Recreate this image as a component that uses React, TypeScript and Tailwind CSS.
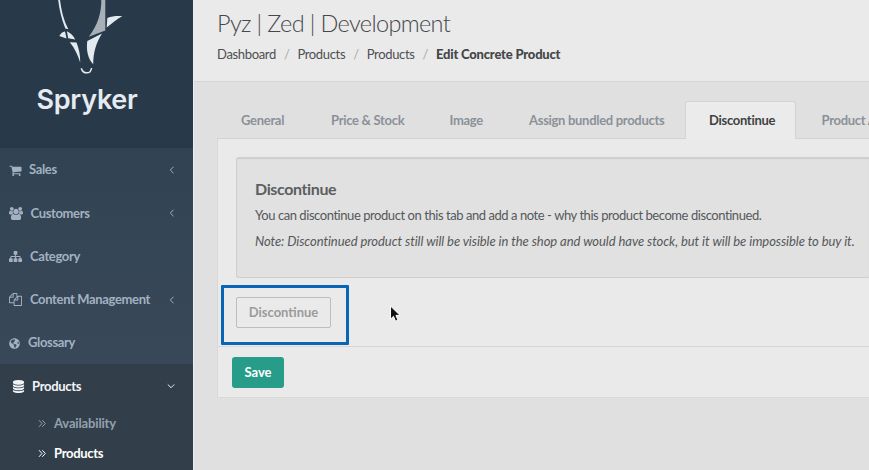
import type { ReactNode } from "react";
import { FaGlobeAmericas } from "react-icons/fa";

const paths = {
  cart: "M704 1536q0 52-38 90t-90 38-90-38-38-90 38-90 90-38 90 38 38 90zm896 0q0 52-38 90t-90 38-90-38-38-90 38-90 90-38 90 38 38 90zm128-1088v512q0 24-16.5 42.5t-40.5 21.5l-1044 122q13 60 13 70 0 16-24 64h920q26 0 45 19t19 45-19 45-45 19h-1024q-26 0-45-19t-19-45q0-11 8-31.5t16-36 21.5-40 15.5-29.5l-177-823h-204q-26 0-45-19t-19-45 19-45 45-19h256q16 0 28.5 6.5t19.5 15.5 13 24.5 8 26 5.5 29.5 4.5 26h1201q26 0 45 19t19 45z",
  users: "M593 896q-162 5-265 128h-134q-82 0-138-40.5t-56-118.5q0-353 124-353 6 0 43.5 21t97.5 42.5 119 21.5q67 0 133-23-5 37-5 66 0 139 81 256zm1071 637q0 120-73 189.5t-194 69.5h-874q-121 0-194-69.5t-73-189.5q0-53 3.5-103.5t14-109 26.5-108.5 43-97.5 62-81 85.5-53.5 111.5-20q10 0 43 21.5t73 48 107 48 135 21.5 135-21.5 107-48 73-48 43-21.5q61 0 111.5 20t85.5 53.5 62 81 43 97.5 26.5 108.5 14 109 3.5 103.5zm-1024-1277q0 106-75 181t-181 75-181-75-75-181 75-181 181-75 181 75 75 181zm704 384q0 159-112.5 271.5t-271.5 112.5-271.5-112.5-112.5-271.5 112.5-271.5 271.5-112.5 271.5 112.5 112.5 271.5zm576 225q0 78-56 118.5t-138 40.5h-134q-103-123-265-128 81-117 81-256 0-29-5-66 66 23 133 23 59 0 119-21.5t97.5-42.5 43.5-21q124 0 124 353zm-128-609q0 106-75 181t-181 75-181-75-75-181 75-181 181-75 181 75 75 181z",
  sitemap: "M1792 1248v320q0 40-28 68t-68 28h-320q-40 0-68-28t-28-68v-320q0-40 28-68t68-28h96v-192h-512v192h96q40 0 68 28t28 68v320q0 40-28 68t-68 28h-320q-40 0-68-28t-28-68v-320q0-40 28-68t68-28h96v-192h-512v192h96q40 0 68 28t28 68v320q0 40-28 68t-68 28h-320q-40 0-68-28t-28-68v-320q0-40 28-68t68-28h96v-192q0-52 38-90t90-38h512v-192h-96q-40 0-68-28t-28-68v-320q0-40 28-68t68-28h320q40 0 68 28t28 68v320q0 40-28 68t-68 28h-96v192h512q52 0 90 38t38 90v192h96q40 0 68 28t28 68z",
  files: "M1696 384q40 0 68 28t28 68v1216q0 40-28 68t-68 28h-960q-40 0-68-28t-28-68v-288h-544q-40 0-68-28t-28-68v-672q0-40 20-88t48-76l408-408q28-28 76-48t88-20h416q40 0 68 28t28 68v328q68-40 128-40h416zm-544 213l-299 299h299v-299zm-640-384l-299 299h299v-299zm196 647l316-316v-416h-384v416q0 40-28 68t-68 28h-416v640h512v-256q0-40 20-88t48-76zm956 804v-1152h-384v416q0 40-28 68t-68 28h-416v640h896z",
  database: "M896 768q237 0 443-43t325-127v170q0 69-103 128t-280 93.5-385 34.5-385-34.5-280-93.5-103-128v-170q119 84 325 127t443 43zm0 768q237 0 443-43t325-127v170q0 69-103 128t-280 93.5-385 34.5-385-34.5-280-93.5-103-128v-170q119 84 325 127t443 43zm0-384q237 0 443-43t325-127v170q0 69-103 128t-280 93.5-385 34.5-385-34.5-280-93.5-103-128v-170q119 84 325 127t443 43zm0-1152q208 0 385 34.5t280 93.5 103 128v128q0 69-103 128t-280 93.5-385 34.5-385-34.5-280-93.5-103-128v-128q0-69 103-128t280-93.5 385-34.5z",
};

function Glyph({ d, box = "0 0 1792 1792", className }: { d: string; box?: string; className: string }) {
  return (
    <svg viewBox={box} className={`shrink-0 fill-current ${className}`}>
      <path d={d} />
    </svg>
  );
}

function Chevron({ className }: { className: string }) {
  return (
    <svg viewBox="0 0 8 8" className={`size-2 shrink-0 fill-none stroke-current ${className}`}>
      <path d="M5.5 0.8 2.3 4l3.2 3.2" strokeWidth="1" />
    </svg>
  );
}

function Logo() {
  return (
    <svg viewBox="0 0 80 76" className="h-[76px] w-20 shrink-0">
      <path d="M8.200 0h1.800C11.300 10 13.500 20 18.300 29.300l-3-.8C11.500 19 9.200 9 8.200 0z" fill="#e3eaf0" />
      <path d="M9.300 36c1.500-2.800 3.500-4.300 5.700-4.500l1.500 7zM16.900 31.200c3.500 1.500 6.500 4.500 8.300 8.300l-7-1.200z" fill="#e3eaf0" />
      <path d="M19.800 42.200l6.700.4c2.500 6 3.800 12.700 3.700 19.800C27.700 55 25 48.500 19.800 42.200z" fill="#e3eaf0" />
      <path d="M51.300 0h4v30.500L38.800 36.800C48 25 51.500 12 51.300 0z" fill="#a8b0b7" />
      <path d="M57.300 18c5-1.900 9.500-2.200 15-1.800-5.600 2.600-9.700 6.800-15.600 11.300z" fill="#e3eaf0" />
      <path d="M37.300 41l14.700-7.400c-5.800 9-8.600 18.500-8.800 30.700-5.200-5.500-7.200-14-5.900-23.300z" fill="#e3eaf0" />
      <path d="M31.300 68.200c1.700 6.200 9.500 6.300 10.200-.2" fill="none" stroke="#e3eaf0" strokeWidth="1.500" />
    </svg>
  );
}

function NavItem({ icon, label, className, arrow }: { icon: ReactNode; label: string; className: string; arrow?: boolean }) {
  return (
    <li className="flex h-[43.25px] items-center pt-px pr-[17px] pl-[9px] text-[13px] font-bold tracking-[-0.35px] text-[#a3b1c2]">
      {icon}
      <span className={`whitespace-nowrap ${className}`}>{label}</span>
      {arrow && <Chevron className="ml-auto" />}
    </li>
  );
}

function Sidebar() {
  return (
    <aside className="flex w-[193px] shrink-0 flex-col bg-[#33434f]">
      <div className="flex h-[148px] flex-col items-center bg-[#283a49] pr-[19px]">
        <div className="pl-[6px]"><Logo /></div>
        <div className="mt-[8px] font-[Inter,sans-serif] text-[27px] leading-[32px] font-semibold tracking-[-0.3px] text-[#e6ebf2]">Spryker</div>
      </div>
      <ul className="bg-linear-to-b from-[#314352] to-[#394858]">
        <NavItem icon={<Glyph d={paths.cart} className="size-[13px]" />} label="Sales" className="ml-[7px]" arrow />
        <NavItem icon={<Glyph d={paths.users} box="0 0 1920 1792" className="h-[13px] w-[14px]" />} label="Customers" className="ml-[7.5px]" arrow />
        <NavItem icon={<Glyph d={paths.sitemap} className="size-[13px]" />} label="Category" className="ml-[8px]" />
        <NavItem icon={<Glyph d={paths.files} className="size-[13px]" />} label="Content Management" className="ml-[8px]" arrow />
        <NavItem icon={<FaGlobeAmericas className="size-[11px]" />} label="Glossary" className="ml-[8px]" />
      </ul>
      <div className="flex-1 bg-[#323f4b] text-[13px] font-bold tracking-[-0.3px]">
        <div className="flex h-[44px] items-center pr-[18px] pl-[12px] text-[#f1f4f7]">
          <Glyph d={paths.database} className="size-[13px]" />
          <span className="ml-[7px]">Products</span>
          <Chevron className="ml-auto -rotate-90" />
        </div>
        <div className="flex h-[30px] items-center pl-[38px] text-[#94a0ad]">
          <Raquo />
          <span className="ml-[7px] tracking-[-0.15px]">Availability</span>
        </div>
        <div className="flex h-[30px] items-center pl-[38px] text-white">
          <Raquo />
          <span className="ml-[7px]">Products</span>
        </div>
      </div>
    </aside>
  );
}

function Raquo() {
  return (
    <svg viewBox="0 0 9 9" className="size-[9px] shrink-0 fill-none stroke-current">
      <path d="M1 1.200 4 4.500 1 7.800M4.300 1.200 7.300 4.500 4.300 7.800" />
    </svg>
  );
}

function Slash() {
  return <span className="w-[21.5px] pl-[8px] text-[#a9a9a9]">/</span>;
}

export default function App() {
  return (
    <div className="relative flex h-[470px] w-[869px] overflow-hidden bg-[#e0e0e0] font-[Lato,sans-serif] text-[13px] text-[#55585a]">
      <Sidebar />
      <main className="flex w-[676px] shrink-0 flex-col border-l border-[#eeeeee]">
        <header className="h-[82px] border-b border-[#d5d5d5] bg-[#eaeaea] pl-[23px]">
          <h1 className="pt-[8px] text-[23.5px] leading-[30px] font-light tracking-[-0.64px] whitespace-nowrap text-[#45474a]">Pyz | Zed | Development</h1>
          <nav className="mt-[8px] flex leading-4 tracking-[-0.34px] whitespace-nowrap text-[#4d4f50]">
            <span>Dashboard</span><Slash />
            <span>Products</span><Slash />
            <span>Products</span><Slash />
            <b className="font-black tracking-[-0.2px] text-[#444647]">Edit Concrete Product</b>
          </nav>
        </header>
        <div className="mt-[19px] ml-[23px] flex h-[38px] items-stretch font-bold tracking-[-0.3px] whitespace-nowrap text-[#8b9198]">
          <div className="flex w-[468px] border-b border-[#d3d3d3] pl-[24px] leading-[38px]">
            <span className="w-[90px]">General</span>
            <span className="w-[118px]">Price &amp; Stock</span>
            <span className="w-[80px] pl-[0.5px]">Image</span>
            <span>Assign bundled products</span>
          </div>
          <div className="w-[111px] rounded-t-[3px] border border-b-0 border-[#d3d3d3] bg-[#ebebeb] pl-[23px] leading-[36px] text-[#404243]">Discontinue</div>
          <div className="flex-1 overflow-hidden border-b border-[#d3d3d3] pl-[25.5px] leading-[38px]">Product Alternatives</div>
        </div>
        <section className="ml-[23px] h-[259px] border-b border-l border-[#d9d9d9] bg-[#eaeaea]">
          <div className="h-[208px] border-b border-[#d5d5d5] pt-[18px] pl-[18px]">
            <div className="h-[121px] rounded-l-[3px] border border-r-0 border-[#cfcfcf] bg-[#e1e1e1] pt-[21px] pl-[18px] whitespace-nowrap shadow-[inset_0_1px_1px_#cccccc]">
              <h2 className="text-[16px] leading-5 font-bold tracking-[-0.38px] text-[#5b5e60]">Discontinue</h2>
              <p className="mt-[7px] leading-[18px] tracking-[-0.44px]">You can discontinue product on this tab and add a note - why this product become discontinued.</p>
              <p className="mt-[8px] leading-[18px] tracking-[-0.07px] italic">Note: Discontinued product still will be visible in the shop and would have stock, but it will be impossible to buy it.</p>
            </div>
            <button className="mt-[19px] h-[31px] w-[95px] rounded-[2px] border border-[#bdbdbd] font-bold text-[#999b9c]">Discontinue</button>
          </div>
          <button className="mt-[10px] ml-[14px] h-[31px] w-[52px] rounded-[3px] bg-[#269c89] font-bold text-white">Save</button>
        </section>
      </main>
      <div className="absolute top-[285px] left-[220.5px] h-[59.5px] w-[128px] rounded-[1px] border-3 border-[#0866b5]" />
      <svg viewBox="0 0 12 18" className="absolute top-[305px] left-[389px] h-[18px] w-3">
        <path d="M1.500 1v13.200l3-2.900 2.100 4.900 2.400-1-2.100-4.800h4.200z" fill="#111" stroke="#fff" strokeWidth="1" />
      </svg>
    </div>
  );
}
